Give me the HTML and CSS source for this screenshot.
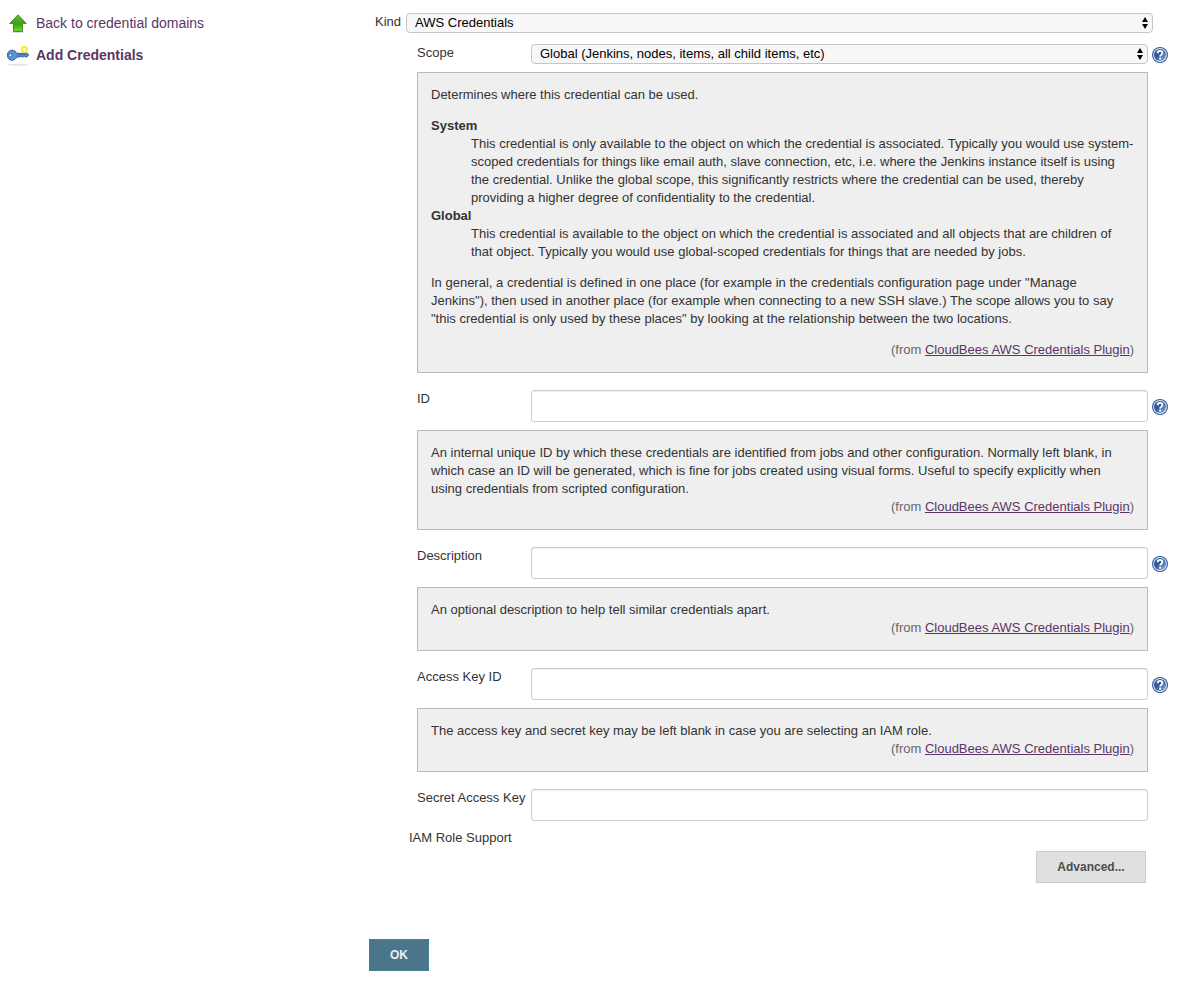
FILE: index.html
```html
<!DOCTYPE html>
<html lang="en">
<head>
<meta charset="utf-8">
<meta name="viewport" content="width=device-width, initial-scale=1">
<title>Add Credentials</title>
<link rel="stylesheet" href="styles.css">
</head>
<body>
<svg class="symbols" aria-hidden="true">
  <defs>
    <linearGradient id="blue" x1="0" y1="0" x2="1" y2="1">
      <stop offset="0" stop-color="#2c5795"/><stop offset="0.45" stop-color="#2f5c9c"/><stop offset="1" stop-color="#8fb2dc"/>
    </linearGradient>
    <symbol id="help" viewBox="0 0 16 16">
      <circle cx="8" cy="8" r="8" fill="#2f5a97"/>
      <circle cx="8" cy="8" r="6.9" fill="#e9f0f9"/>
      <circle cx="8" cy="8" r="6" fill="url(#blue)"/>
      <path d="M5.7 6.2C5.7 4.6 6.6 3.9 8 3.9s2.4.8 2.4 2.1c0 1.7-2.2 1.8-2.2 3.6" fill="none" stroke="#fff" stroke-width="1.9"/>
      <rect x="7.2" y="10.6" width="2" height="2" fill="#fff"/>
    </symbol>
    <symbol id="updown" viewBox="0 0 6 12">
      <path d="M0 5 3 0l3 5zM0 7h6l-3 5z"/>
    </symbol>
  </defs>
</svg>
<div class="page">
  <nav class="sidebar">
    <a class="task" href="#domains">
      <svg class="task-icon" viewBox="0 0 24 24" aria-hidden="true">
        <defs><linearGradient id="green" x1="0" y1="0" x2="0" y2="1"><stop offset="0" stop-color="#6cbb34"/><stop offset="0.55" stop-color="#3f9d16"/><stop offset="1" stop-color="#67df2b"/></linearGradient></defs>
        <ellipse cx="12" cy="21" rx="7" ry="1.2" fill="#ddd"/>
        <path d="M12 3.8 20.2 12.5H16.5V20.5H7.5V12.5H3.8z" fill="url(#green)" stroke="#469322" stroke-width="1" stroke-linejoin="round"/>
      </svg>
      <span>Back to credential domains</span>
    </a>
    <a class="task task-current" href="#add">
      <svg class="task-icon" viewBox="0 0 24 24" aria-hidden="true">
        <ellipse cx="12" cy="21.8" rx="10" ry="1" fill="#e3e3e3"/>
        <path d="M6 7.2c2.4 0 3.8 1.2 4.6 3.1H21.5l1.2 1.5-1.8 2.2h-1.6l-1-1-1.1 1h-1.3l-1-1-1.1 1h-3.2c-.8 2-2.3 3.2-4.6 3.2-2.8 0-4.6-2.1-4.6-5s1.8-5 4.6-5z" fill="#5d93ce" stroke="#33639f" stroke-width="1"/>
        <path d="M10.5 11.8H20.5" stroke="#3a6ba8" stroke-width="1"/>
        <circle cx="4.4" cy="12.2" r="1.5" fill="#fff" stroke="#33639f" stroke-width="1"/>
        <circle cx="18.4" cy="6.3" r="2.6" fill="#fffbd0" stroke="#fae93c" stroke-width="2"/>
      </svg>
      <span>Add Credentials</span>
    </a>
  </nav>
  <main class="main">
    <form class="form">
      <div class="kind">
        <label for="kind">Kind</label>
        <span class="picker"><select id="kind"><option>AWS Credentials</option></select><svg class="arrows" aria-hidden="true"><use href="#updown"/></svg></span>
      </div>
      <section class="settings">
        <div class="row">
          <label class="name" for="scope">Scope</label>
          <span class="picker"><select id="scope"><option>Global (Jenkins, nodes, items, all child items, etc)</option></select><svg class="arrows" aria-hidden="true"><use href="#updown"/></svg></span>
          <a class="help-link" href="#help-scope" aria-label="Help for Scope"><svg class="help-icon"><use href="#help"/></svg></a>
        </div>
        <div class="help" id="help-scope">
          <p>Determines where this credential can be used.</p>
          <dl>
            <dt>System</dt>
            <dd>This credential is only available to the object on which the credential is associated. Typically you would use system-scoped credentials for things like email auth, slave connection, etc, i.e. where the Jenkins instance itself is using the credential. Unlike the global scope, this significantly restricts where the credential can be used, thereby providing a higher degree of confidentiality to the credential.</dd>
            <dt>Global</dt>
            <dd>This credential is available to the object on which the credential is associated and all objects that are children of that object. Typically you would use global-scoped credentials for things that are needed by jobs.</dd>
          </dl>
          <p>In general, a credential is defined in one place (for example in the credentials configuration page under "Manage Jenkins"), then used in another place (for example when connecting to a new SSH slave.) The scope allows you to say "this credential is only used by these places" by looking at the relationship between the two locations.</p>
          <div class="from">(from <a href="#plugin">CloudBees AWS Credentials Plugin</a>)</div>
        </div>
        <div class="row">
          <label class="name" for="cred-id">ID</label>
          <input class="text" id="cred-id" type="text">
          <a class="help-link" href="#help-id" aria-label="Help for ID"><svg class="help-icon"><use href="#help"/></svg></a>
        </div>
        <div class="help" id="help-id">
          <div>An internal unique ID by which these credentials are identified from jobs and other configuration. Normally left blank, in which case an ID will be generated, which is fine for jobs created using visual forms. Useful to specify explicitly when using credentials from scripted configuration.</div>
          <div class="from">(from <a href="#plugin">CloudBees AWS Credentials Plugin</a>)</div>
        </div>
        <div class="row">
          <label class="name" for="description">Description</label>
          <input class="text" id="description" type="text">
          <a class="help-link" href="#help-description" aria-label="Help for Description"><svg class="help-icon"><use href="#help"/></svg></a>
        </div>
        <div class="help" id="help-description">
          <div>An optional description to help tell similar credentials apart.</div>
          <div class="from">(from <a href="#plugin">CloudBees AWS Credentials Plugin</a>)</div>
        </div>
        <div class="row">
          <label class="name" for="access-key">Access Key ID</label>
          <input class="text" id="access-key" type="text">
          <a class="help-link" href="#help-access" aria-label="Help for Access Key ID"><svg class="help-icon"><use href="#help"/></svg></a>
        </div>
        <div class="help" id="help-access">
          <div>The access key and secret key may be left blank in case you are selecting an IAM role.</div>
          <div class="from">(from <a href="#plugin">CloudBees AWS Credentials Plugin</a>)</div>
        </div>
        <div class="row">
          <label class="name" for="secret-key">Secret Access Key</label>
          <input class="text" id="secret-key" type="password">
          <span class="help-link"></span>
        </div>
      </section>
      <div class="iam">
        <div>IAM Role Support</div>
        <button class="button advanced" type="button">Advanced...</button>
      </div>
      <button class="button ok" type="submit">OK</button>
    </form>
  </main>
</div>
</body>
</html>
```
FILE: styles.css
```css
* {
  box-sizing: border-box;
}

body {
  margin: 0;
  background: #fff;
  color: #333;
  font: 13px/18px "Liberation Sans", Helvetica, Arial, sans-serif;
}

a {
  color: #5c3566;
}

.symbols {
  position: absolute;
  width: 0;
  height: 0;
}

.page {
  display: flex;
}

.sidebar {
  flex: 0 0 369px;
  display: flex;
  flex-direction: column;
  align-items: flex-start;
  gap: 8px;
  padding: 11px 6px;
}

.task {
  display: flex;
  align-items: center;
  gap: 6px;
  height: 24px;
  font-size: 14px;
  text-decoration: none;
}

.task-current {
  font-weight: bold;
}

.task-icon {
  width: 24px;
  height: 24px;
}

.main {
  flex: 1;
  min-width: 0;
  padding: 13px 15px 31px 0;
}

.kind {
  display: flex;
  gap: 5px;
  margin: 0 15px 11px 6px;
}

.picker {
  position: relative;
  flex: 1;
  min-width: 0;
  height: 20px;
}

select {
  display: block;
  appearance: none;
  width: 100%;
  height: 20px;
  padding: 0 20px 0 8px;
  border: 1px solid #c6c6c6;
  border-radius: 4px;
  background: #f7f7f7;
  color: #000;
  font: inherit;
}

.arrows {
  position: absolute;
  top: 4px;
  right: 5px;
  width: 6px;
  height: 12px;
  pointer-events: none;
}

.settings {
  padding-left: 48px;
}

.row {
  display: flex;
  align-items: flex-start;
}

.name {
  flex: 0 0 114px;
  white-space: nowrap;
}

.text {
  flex: 1;
  min-width: 0;
  height: 32px;
  padding: 6px;
  border: 1px solid #ccc;
  border-radius: 3px;
  background: #fff;
  box-shadow: inset 0 1px 1px #eee;
  font: inherit;
}

.help-link {
  flex: 0 0 20px;
  display: flex;
  align-self: center;
  justify-content: flex-end;
  padding-top: 2px;
}

.help-icon {
  width: 16px;
  height: 16px;
}

.help {
  margin: 8px 20px 17px 0;
  padding: 13px;
  border: 1px solid #bbb;
  background: #efefef;
}

.help p,
.help dl {
  margin: 0 0 13px;
}

.help dt {
  font-weight: bold;
}

.help dd {
  margin-left: 40px;
}

.from {
  color: #666;
  text-align: right;
}

.iam {
  display: flex;
  flex-direction: column;
  margin: 8px 22px 56px 40px;
  gap: 4px;
}

.button {
  height: 32px;
  padding: 0 20px;
  border: 1px solid #ccc;
  font: bold 12px/18px "Liberation Sans", Helvetica, Arial, sans-serif;
}

.advanced {
  align-self: flex-end;
  min-width: 110px;
  background: #e0e0e0;
  color: #4d4d4d;
}

.ok {
  display: block;
  min-width: 60px;
  border-color: #4a7f98;
  background: #4b758b;
  color: #eee;
}
```
